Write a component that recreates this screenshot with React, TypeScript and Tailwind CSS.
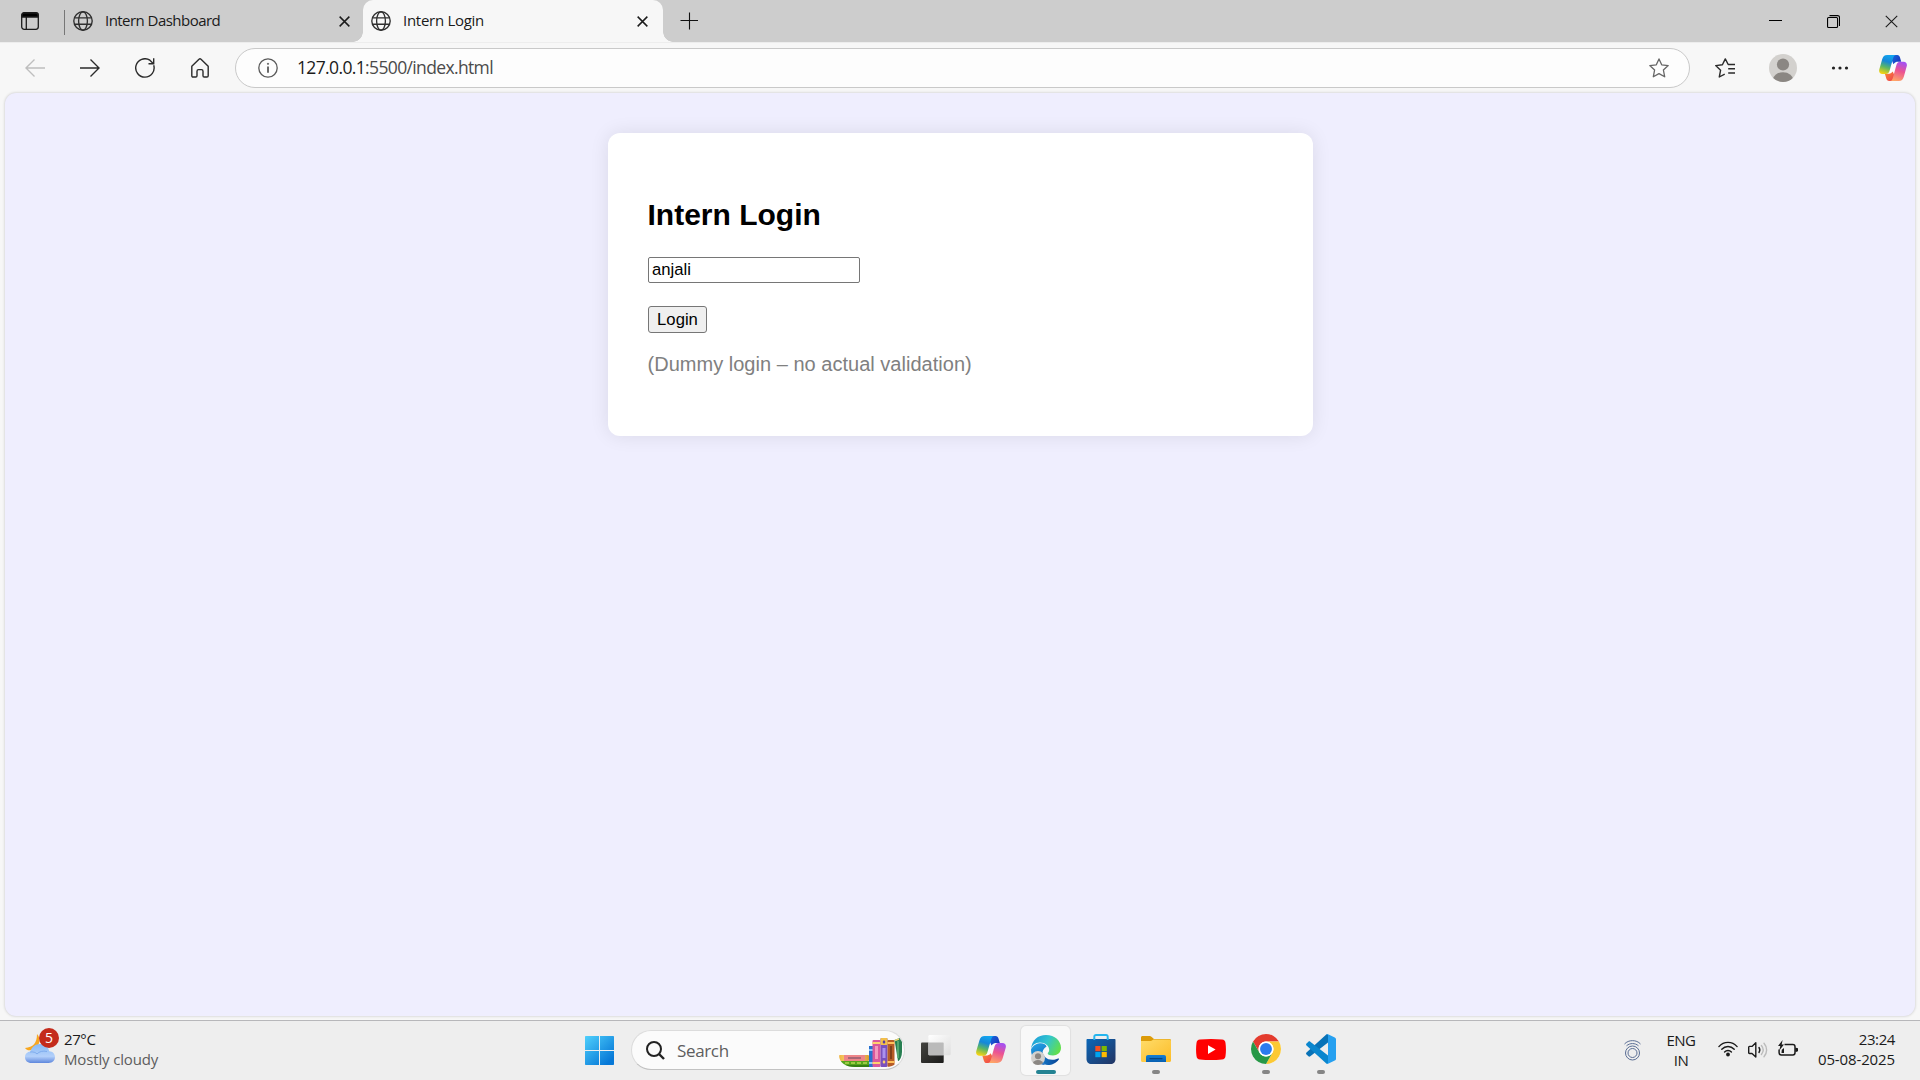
import React from "react";

type P = { className?: string };

const Globe = ({ className = "" }: P) => (
  <svg className={className} width="20" height="20" viewBox="0 0 20 20" fill="none" stroke="#2f2f2f" strokeWidth="1.35">
    <circle cx="10" cy="10" r="9.2" />
    <ellipse cx="10" cy="10" rx="4.4" ry="9.2" />
    <path d="M1.5 6.8h17M1.5 13.2h17" />
  </svg>
);

const Cross = ({ size, w, className = "" }: { size: number; w: number; className?: string }) => (
  <svg className={className} width={size} height={size} viewBox="0 0 12 12" stroke="#1b1b1b" strokeWidth={w} fill="none">
    <path d="M.7.7l10.6 10.6M11.3.7L.7 11.3" />
  </svg>
);

const Copilot = ({ id, w, h }: { id: string; w: number; h: number }) => (
  <svg width={w} height={h} viewBox="0 0 30 27" preserveAspectRatio="none">
    <defs>
      <linearGradient id={id + "a"} x1="0.6" y1="0" x2="0.3" y2="1">
        <stop offset="0" stopColor="#12a5ef" />
        <stop offset=".35" stopColor="#1687d8" />
        <stop offset=".65" stopColor="#5bb765" />
        <stop offset="1" stopColor="#f6d312" />
      </linearGradient>
      <linearGradient id={id + "b"} x1="0.6" y1="0" x2="0.3" y2="1">
        <stop offset="0" stopColor="#a650ef" />
        <stop offset=".45" stopColor="#ec5391" />
        <stop offset="1" stopColor="#ffa766" />
      </linearGradient>
      <linearGradient id={id + "c"} x1="0" y1="0" x2="1" y2=".6">
        <stop offset="0" stopColor="#1670e0" />
        <stop offset="1" stopColor="#1c35bd" />
      </linearGradient>
      <linearGradient id={id + "d"} x1="0" y1="0" x2="1" y2="1">
        <stop offset="0" stopColor="#fb8b33" />
        <stop offset="1" stopColor="#ee3d52" />
      </linearGradient>
    </defs>
    <path d="M13.500 7.500h8L18.500 10l-3.500 11-6.500-1.500z" fill="#fdfdfd" />
    <path d="M14 0h5.600c1.600 0 2.400 1 2.900 2.600L23.800 7.100h-3.300c-2.200 0-3.500.6-5 2.400L13 4z" fill={`url(#${id}c)`} />
    <path d="M16 27h-5.200c-1.700 0-2.500-1-3-2.600L6.300 19.600h3.400c2.300 0 3.700-.6 5-2.400L17 22z" fill={`url(#${id}d)`} />
    <path d="M8.700 0h9.300c-1.700.3-2.300 1.500-2.900 3.500l-3.700 12.700c-.6 2.100-1.800 3.500-4.200 3.500H3.700C.7 19.700-.4 17.600.3 15L3.400 4.400C4.300 1.500 5.800 0 8.700 0z" fill={`url(#${id}a)`} />
    <path d="M21.300 27h-9.300c1.700-.3 2.300-1.500 2.900-3.500l3.700-12.900c.6-2.100 1.800-3.500 4.200-3.500h3.500c3 0 4.100 2.100 3.400 4.700l-3.100 10.800c-.9 2.900-2.400 4.400-5.300 4.400z" fill={`url(#${id}b)`} />
  </svg>
);

const Avatar = ({ size, id }: { size: number; id: string }) => (
  <svg width={size} height={size} viewBox="0 0 28 28">
    <clipPath id={id}><circle cx="14" cy="14" r="14" /></clipPath>
    <circle cx="14" cy="14" r="14" fill="#d3d1ce" />
    <g fill="#8b8783" clipPath={`url(#${id})`}>
      <circle cx="14" cy="10.500" r="6.100" />
      <ellipse cx="14" cy="26.500" rx="10.500" ry="8.300" />
    </g>
  </svg>
);

function TabStrip() {
  return (
    <div className="flex h-[42px] items-stretch bg-[#cdcdcd] text-[15px] text-[#1a1a1a]">
      <div className="flex w-[64px] items-center pl-[21px]">
        <svg width="18" height="18" viewBox="0 0 18 18" fill="none" stroke="#1b1b1b" strokeWidth="1.300">
          <rect x=".7" y=".7" width="16.600" height="16.600" rx="2.500" />
          <path d="M1 3.200C1 1.500 2 1 3.200 1h11.600C16.200 1 17 1.700 17 3.200V5H1z" fill="#000" />
          <path d="M5.300 5v12.500" />
        </svg>
      </div>
      <div className="flex w-[299px] items-center">
        <div className="h-[25px] w-px bg-[#777] mt-[2px]" />
        <Globe className="ml-2" />
        <span className="mb-[2px] ml-3 w-[222px] whitespace-nowrap tracking-[-0.54px]">Intern Dashboard</span>
        <Cross size={11} w={1.6} className="ml-[12px] mt-px" />
      </div>
      <div className="relative flex w-[300px] items-center rounded-t-[10px] bg-[#f7f7f7]">
        <span className="absolute bottom-0 left-[-10px] size-[10px] bg-[radial-gradient(circle_at_0_0,#cdcdcd_9.500px,#f7f7f7_10px)]" />
        <span className="absolute right-[-10px] bottom-0 size-[10px] bg-[radial-gradient(circle_at_100%_0,#cdcdcd_9.500px,#f7f7f7_10px)]" />
        <Globe className="ml-2" />
        <span className="mb-[2px] ml-[12px] w-[222px] whitespace-nowrap tracking-[-0.28px]">Intern Login</span>
        <Cross size={11} w={1.6} className="ml-[12px] mt-px" />
      </div>
      <div className="flex items-center pl-[17px]">
        <svg width="18" height="18" viewBox="0 0 18 18" stroke="#111" strokeWidth="1.100"><path d="M9.500 .5v17M.5 8.500h18" /></svg>
      </div>
      <div className="ml-auto flex items-center pr-[22px]">
        <svg width="13" height="2" viewBox="0 0 13 2"><path d="M0 .5h13" stroke="#000" /></svg>
        <svg className="ml-[45px]" width="13" height="13" viewBox="0 0 13 13" fill="none" stroke="#000" strokeWidth="1.100">
          <rect x=".55" y="2.550" width="10" height="9.900" rx="1" />
          <path d="M2.500.6h8.200c1.200 0 1.800.6 1.800 1.800V11" />
        </svg>
        <Cross size={13} w={1} className="ml-[45px]" />
      </div>
    </div>
  );
}

function Toolbar() {
  return (
    <div className="flex h-[51px] items-center border-t border-[#ededed] bg-[#f7f7f7]">
      <svg className="ml-[25px]" width="20" height="18" viewBox="0 0 20 18" fill="none" stroke="#bebebe" strokeWidth="1.400"><path d="M20 9H1M9.500.6L1 9l8.500 8.400" /></svg>
      <svg className="ml-[35px]" width="20" height="18" viewBox="0 0 20 18" fill="none" stroke="#2b2b2b" strokeWidth="1.400"><path d="M0 9h19M10.500.6L19 9l-8.500 8.400" /></svg>
      <svg className="ml-[35px]" width="20" height="20" viewBox="0 0 20 20" fill="none" stroke="#2b2b2b" strokeWidth="1.400"><path d="M18.700 7.200A9.200 9.200 0 1 1 14.900 2.200l3.300 3.300M18.700.3v5.400h-5.200" /></svg>
      <svg className="ml-[36px]" width="18" height="20" viewBox="0 0 18 20" fill="none" stroke="#2b2b2b" strokeWidth="1.400" strokeLinejoin="round"><path d="M.8 8.300L8 1.200c.6-.5 1.400-.5 2 0l7.200 7.100v9.400c0 .8-.5 1.300-1.300 1.300h-2.700c-.7 0-1.200-.5-1.200-1.200v-4.600c0-1-.6-1.600-1.500-1.600h-3c-.9 0-1.500.6-1.500 1.600v4.600c0 .7-.5 1.200-1.200 1.200H2.100c-.8 0-1.300-.5-1.300-1.300z" /></svg>
      <div className="ml-[26px] flex h-[40px] w-[1455px] items-center rounded-full border border-[#c9c9c9] bg-[#fdfdfd] pr-[20px] pl-[22px]">
        <svg width="20" height="20" viewBox="0 0 20 20" fill="none" stroke="#5a5a5a" strokeWidth="1.300"><circle cx="10" cy="10" r="9.200" /><path d="M10 8.500v6.300" strokeWidth="1.800" /><circle cx="10" cy="5.800" r=".6" fill="#5a5a5a" strokeWidth="1" /></svg>
        <span className="mb-px ml-[19px] text-[17.5px] tracking-[-0.64px] whitespace-nowrap text-[#4b4b4b]"><span className="text-[#1b1b1b]">127.0.0.1</span>:5500/index.html</span>
        <svg className="ml-auto" width="20" height="20" viewBox="0 0 20 20" fill="none" stroke="#666" strokeWidth="1.300" strokeLinejoin="round"><path d="M10 .9l2.700 5.900 6.500.8-4.800 4.400 1.300 6.800L10 15.600l-5.700 3.200L5.600 12 .8 7.600l6.500-.8z" /></svg>
      </div>
      <svg className="ml-[25px]" width="20" height="20" viewBox="0 0 20 20" fill="none" stroke="#2b2b2b" strokeWidth="1.400" strokeLinejoin="round"><path d="M20 6.500h-6.800L10.300.9 7.400 6.700.7 7.600l4.900 4.600-1.300 6.800 5.400-2.900M13.200 10.700H20M13.200 15H20" /></svg>
      <div className="ml-[34px]"><Avatar size={28} id="avatar-bar" /></div>
      <svg className="ml-[34px]" width="18" height="4" viewBox="0 0 18 4" fill="#222"><circle cx="2.500" cy="2" r="1.600" /><circle cx="9" cy="2" r="1.600" /><circle cx="15.500" cy="2" r="1.600" /></svg>
      <div className="ml-[30px]"><Copilot id="cpbar" w={28} h={26} /></div>
    </div>
  );
}

function LoginPage() {
  return (
    <div className="mx-[5px] mb-1 h-[923px] rounded-[11px] bg-[#efeefe] pt-10 font-['Liberation_Sans',Arial,sans-serif] shadow-[0_0_3px_rgba(0,0,0,0.22)]">
      <div className="mx-auto h-[303px] w-[705px] rounded-[12px] bg-white px-10 pt-[65px] shadow-[0_0_19px_rgba(0,0,0,0.09)]">
        <h2 className="h-[34px] text-[30px] leading-[34px] font-bold text-black">Intern Login</h2>
        <input type="text" defaultValue="anjali" className="mt-[25px] block h-[26px] w-[212px] rounded-[2px] border border-[#767676] bg-white pr-[3px] pb-px pl-[3.500px] text-[16.67px] leading-[20px] text-black outline-none" />
        <button className="mt-[23px] block h-[27px] w-[59px] rounded-[3px] border border-[#767676] bg-[#efefef] pl-px text-[16.67px] leading-[24px] text-black">Login</button>
        <p className="mt-5 text-[20px] leading-[23px] tracking-[0.02px] whitespace-nowrap text-[#808080]">(Dummy login – no actual validation)</p>
      </div>
    </div>
  );
}

const Books = () => (
  <svg width="63" height="29" viewBox="0 0 63 29">
    <defs>
      <clipPath id="pill"><path d="M0 0h63v14c0 9-8 15-16 15H16C7 29 0 25 0 17z" /></clipPath>
      <linearGradient id="gold" x1="0" x2="1"><stop offset="0" stopColor="#efb443" /><stop offset=".5" stopColor="#ffe695" /><stop offset="1" stopColor="#d99b31" /></linearGradient>
    </defs>
    <g clipPath="url(#pill)">
      <path d="M2 23h30v6H2z" fill="#56a51c" />
      <path d="M6 25h23" stroke="#b3d84f" strokeWidth="1.500" strokeDasharray="4 2" />
      <path d="M4 28h28" stroke="#2d7212" strokeWidth="1.500" />
      <rect x="0" y="17" width="30" height="6" rx="1" fill="url(#gold)" />
      <rect x="5" y="17" width="21" height="6" fill="#ee8589" />
      <rect x="9" y="19" width="13" height="2" fill="#a86676" />
      <rect x="30" y="8" width="4" height="21" fill="#2870cf" />
      <path d="M30 12h4M30 25h4" stroke="#8ec9fb" strokeWidth="2" />
      <rect x="33.500" y="2" width="8" height="27" rx="1" fill="#d9589b" />
      <path d="M33.500 5h8M33.500 25h8" stroke="#ffd16e" strokeWidth="2" />
      <rect x="36" y="8" width="3" height="13" fill="#f398bd" />
      <rect x="41.500" y="0" width="7" height="29" rx="1" fill="#7951bd" />
      <rect x="41.500" y="0" width="7" height="7" rx="1" fill="#f3c04a" />
      <path d="M45 2l1.500 2L45 6l-1.500-2z" fill="#5537a3" />
      <rect x="43.500" y="10" width="3" height="10" fill="#ab91ed" />
      <path d="M45 22l1.500 2-1.500 2-1.500-2z" fill="#ffd16e" />
      <rect x="48.500" y="2" width="7" height="27" rx="1" fill="#b65c27" />
      <path d="M48.500 5h7M48.500 24h7" stroke="#ffc15a" strokeWidth="2" />
      <rect x="51" y="8" width="2" height="13" fill="#82401b" />
      <path d="M55.500 2l5-2 2.500 4v18l-4 1z" fill="#287f52" />
      <path d="M59 3v17" stroke="#60b57a" strokeWidth="1.500" />
      <path d="M56 2.500l4-1.500" stroke="#e9d572" strokeWidth="1.500" />
    </g>
  </svg>
);

const TaskView = () => (
  <svg width="30" height="28" viewBox="0 0 30 28">
    <defs>
      <linearGradient id="tvd" x1="0" y1="0" x2="1" y2="1"><stop offset="0" stopColor="#444440" /><stop offset="1" stopColor="#1b1b1a" /></linearGradient>
      <linearGradient id="tvl" x1="0" y1="0" x2="1" y2="1"><stop offset="0" stopColor="#fff" /><stop offset="1" stopColor="#dedede" /></linearGradient>
    </defs>
    <rect x="0" y="7.500" width="22.700" height="20.500" rx="1" fill="url(#tvd)" />
    <rect x="7.400" y="0" width="22.300" height="20.200" rx="1.300" fill="url(#tvl)" />
    <path d="M7.400 7.500h14.300c.6 0 1 .4 1 1v11.700H8.400c-.6 0-1-.4-1-1z" fill="#bababa" />
  </svg>
);

const Edge = () => (
  <svg width="30" height="30" viewBox="0 0 30 30">
    <defs>
      <linearGradient id="eg1" x1="0" y1=".2" x2="1" y2=".6"><stop offset="0" stopColor="#1c9bd9" /><stop offset=".5" stopColor="#32c5cf" /><stop offset="1" stopColor="#62df4b" /></linearGradient>
      <linearGradient id="eg2" x1="0" y1="0" x2=".3" y2="1"><stop offset="0" stopColor="#28a7e6" /><stop offset="1" stopColor="#0762bc" /></linearGradient>
      <linearGradient id="eg3" x1="0" y1="0" x2="1" y2="0"><stop offset="0" stopColor="#1377c8" /><stop offset="1" stopColor="#0b4494" /></linearGradient>
    </defs>
    <path d="M0 14.500C0 22.500 5 29.200 14 30c-3.500-4-3.500-9-2.500-13 .6-2.700 2.200-4.600 4-5.300C15 7 3.500 6.500 0 14.500z" fill="url(#eg2)" />
    <path d="M0 14.500C.6 5 7 0 15 0c9 0 15 6 15 12.800 0 5-3.800 7.700-8 7.700-3.500 0-5.300-1-5.300-2 0-.8 1.500-1.300 1.500-3.700C18.200 11 14 7.500 9 7.500c-5 0-8.300 3-9 7z" fill="url(#eg1)" />
    <path d="M11.600 16.500c.1 4.500 4 8.300 9.600 8.300 3 0 5-1 6.100-1.300.7-.2.900.4.500 1C25.500 28 21 30 17 30c-6.300 0-8.400-8-5.400-13.500z" fill="url(#eg3)" />
  </svg>
);

const Store = () => (
  <svg width="30" height="30" viewBox="0 0 30 30">
    <defs><linearGradient id="st" x1="0" y1="0" x2="1" y2="1"><stop offset="0" stopColor="#0b67b8" /><stop offset="1" stopColor="#233462" /></linearGradient></defs>
    <path d="M8.300 6V2.600C8.300 1.600 9 1 10 1h10c1 0 1.700.6 1.700 1.600V6" fill="none" stroke="#24b5ee" strokeWidth="1.900" />
    <path d="M1.500 5h27c.6 0 1 .4 1 1v19c0 3-2 5-5 5h-19c-3 0-5-2-5-5V6c0-.6.400-1 1-1z" fill="url(#st)" />
    <path d="M7.350 4.500h1.900V6h-1.900zM20.750 4.500h1.900V6h-1.900z" fill="#24b5ee" />
    <path d="M9.300 12h5.200v5.200H9.300z" fill="#f25022" /><path d="M15.600 12h5.200v5.200h-5.200z" fill="#7fba00" />
    <path d="M9.300 18h5.200v5.200H9.300z" fill="#00a4ef" /><path d="M15.600 18h5.200v5.200h-5.200z" fill="#ffb900" />
  </svg>
);

const Folder = () => (
  <svg width="30" height="26" viewBox="0 0 30 26">
    <defs>
      <linearGradient id="fo" x1="0" y1="0" x2="1" y2="1"><stop offset="0" stopColor="#ffdc6a" /><stop offset="1" stopColor="#fcbc27" /></linearGradient>
      <linearGradient id="fb" x1="0" y1="0" x2="0" y2="1"><stop offset="0" stopColor="#147fd6" /><stop offset="1" stopColor="#075fb0" /></linearGradient>
    </defs>
    <path d="M0 1.500C0 .6.600 0 1.500 0h7.200c.7 0 1.200.2 1.700.7L13 3h15.500c.9 0 1.500.6 1.500 1.500V9H0z" fill="#dc9b09" />
    <path d="M0 5h10l2.500-1.500h16c.9 0 1.500.6 1.500 1.500v19.500c0 .9-.6 1.500-1.500 1.500h-27C.6 26 0 25.400 0 24.500z" fill="url(#fo)" />
    <path d="M5 26v-5c0-1.300.8-2 2-2h16c1.200 0 2 .7 2 2v5z" fill="url(#fb)" />
    <path d="M9 22.600h12" stroke="#064683" strokeWidth="1.200" strokeLinecap="round" />
  </svg>
);

const Youtube = () => (
  <svg width="30" height="21" viewBox="0 0 30 21"><path d="M4 .5Q15-.5 26 .5Q29.200.8 29.500 4Q30.400 10.500 29.500 17Q29.200 20.200 26 20.500Q15 21.500 4 20.500Q.8 20.200.5 17Q-.4 10.500.5 4Q.8.8 4 .5z" fill="#f00" /><path d="M12 6.200v8.800l7.600-4.400z" fill="#fff" /></svg>
);

const Chrome = () => (
  <svg width="30" height="30" viewBox="0 0 48 48">
    <circle cx="24" cy="24" r="24" fill="#fff" />
    <path d="M3.220 12A24 24 0 0 1 44.780 12H24A12 12 0 0 0 13.610 30z" fill="#e33b2e" />
    <path d="M44.780 12A24 24 0 0 1 24 48L34.390 30A12 12 0 0 0 24 12z" fill="#fcc934" />
    <path d="M24 48A24 24 0 0 1 3.220 12L13.610 30A12 12 0 0 0 34.390 30z" fill="#279847" />
    <circle cx="24" cy="24" r="12" fill="#fff" /><circle cx="24" cy="24" r="9.500" fill="#2b7bee" />
  </svg>
);

const VSCode = () => (
  <svg width="30" height="30" viewBox="0 0 30 30">
    <path d="M22 .3v8.200L4.300 22.300c-.6.5-1.300.5-1.900 0L.5 20.500c-.6-.6-.6-1.400 0-2L20 .7c.6-.5 1.300-.6 2-.4z" fill="#0872b7" />
    <path d="M22 29.700v-8.200L4.300 7.700c-.6-.5-1.300-.5-1.900 0L.5 9.500c-.6.6-.6 1.400 0 2L20 29.300c.6.500 1.300.6 2 .4z" fill="#0a86ce" />
    <path d="M22 .2l6.800 3.200c.8.4 1.200 1 1.200 1.900v19.400c0 .9-.4 1.500-1.200 1.900L22 29.800c-.8.300-1.500.1-2-.5 1 .7 2 .2 2-.9V1.600c0-1.100-1-1.600-2-.9.500-.6 1.200-.8 2-.5z" fill="#26a0f0" />
    <path d="M22 1v28l7-3.500V4.500z" fill="#26a0f0" />
  </svg>
);

function TaskIcon({ children, mark }: { children: React.ReactNode; mark?: boolean }) {
  return (
    <div className="flex h-[48px] w-[55px] flex-col items-center">
      <div className="flex h-[44px] items-center justify-center pb-[6px] pt-[8px]">{children}</div>
      {mark && <div className="h-1 w-2 rounded-full bg-[#858585]" />}
    </div>
  );
}

function Taskbar() {
  return (
    <div className="flex h-[60px] items-start border-t border-[#b7b7ba] bg-[#eeeeee] text-[#1b1b1b]">
      <div className="flex w-[585px] pt-[6px] pl-[25px]">
        <div className="relative h-[40px] w-[34px]">
          <svg className="mt-[7px]" width="30" height="30" viewBox="0 0 30 30">
            <defs><linearGradient id="cl" x1="0" y1="0" x2="0" y2="1"><stop offset="0" stopColor="#88baf5" /><stop offset=".65" stopColor="#b3d0fa" /><stop offset="1" stopColor="#5e87dc" /></linearGradient></defs>
            <path d="M12 0c5 5 2 14-5 16-3 .8-5.500.3-7-2C8 13.500 12 9 12 0z" fill="#f7a61f" />
            <path d="M6.500 29C2.500 29 0 26.500 0 23.200c0-3 2.200-5.200 5.400-5.600C6.800 12.700 10.500 10 15 10c5 0 8.500 3 9.200 7.200 3.500.2 5.800 2.700 5.800 5.900 0 3.500-2.600 5.900-6.300 5.900z" fill="url(#cl)" />
            <path d="M5 18c3-.5 6 .5 7 2 2-2.500 6-3.500 10-2.500" fill="none" stroke="#75a4ea" strokeWidth=".8" />
          </svg>
          <span className="absolute top-[1px] left-[14px] flex size-[20px] items-center justify-center rounded-full bg-[#c42b1c] text-[14px] leading-[20px] text-white">5</span>
        </div>
        <div className="ml-[5px] pt-[2px] text-[15px] leading-[20px]">
          <div className="tracking-[-0.4px]">27°C</div>
          <div className="tracking-[-0.15px] text-[#5d5d5d]">Mostly cloudy</div>
        </div>
      </div>
      <svg className="mt-[15px]" width="29" height="29" viewBox="0 0 29 29">
        <defs><linearGradient id="win" gradientUnits="userSpaceOnUse" x1="0" y1="0" x2="24" y2="26"><stop offset="0" stopColor="#4fd0fc" /><stop offset="1" stopColor="#0678d7" /></linearGradient></defs>
        <path d="M1 0h13v14H0V1c0-.6.400-1 1-1zM15 0h13c.6 0 1 .4 1 1v13H15zM0 15h14v14H1c-.6 0-1-.4-1-1zM15 15h14v13c0 .6-.4 1-1 1H15z" fill="url(#win)" />
      </svg>
      <div className="mt-[9px] ml-[17px] flex h-[40px] w-[274px] items-center rounded-full border border-[#dcdcdc] border-b-[#c2c2c2] bg-[#fbfbfb] pr-[2px] pl-[14px]">
        <svg width="19" height="19" viewBox="0 0 19 19" fill="none" stroke="#222" strokeWidth="2"><circle cx="8" cy="8" r="7" /><path d="M13 13l5 5" strokeWidth="2.400" /></svg>
        <span className="mt-px ml-[12px] text-[17px] tracking-[-0.35px] text-[#5e5e5e]">Search</span>
        <div className="mt-[5px] ml-auto"><Books /></div>
      </div>
      <div className="mt-[5px] ml-[3px] flex">
        <TaskIcon><TaskView /></TaskIcon>
        <TaskIcon><Copilot id="cptask" w={30} h={27} /></TaskIcon>
        <div className="flex w-[55px] justify-center">
          <div className="relative flex h-[49px] w-[49px] flex-col items-center rounded-[5px] bg-[#f8f8f8] pt-[9px] shadow-[0_0_1px_1px_rgba(0,0,0,0.06)]">
            <Edge />
            <span className="absolute top-[25px] left-[10px]"><Avatar size={14} id="avatar-edge" /></span>
            <div className="mt-[5px] h-[4px] w-[20px] rounded-full bg-[#248393]" />
          </div>
        </div>
        <TaskIcon><Store /></TaskIcon>
        <TaskIcon mark><Folder /></TaskIcon>
        <TaskIcon><Youtube /></TaskIcon>
        <TaskIcon mark><Chrome /></TaskIcon>
        <TaskIcon mark><VSCode /></TaskIcon>
      </div>
      <div className="ml-auto flex h-full items-start pr-[25px] text-[15px] leading-[20px]">
        <svg className="mt-[19px]" width="17" height="21" viewBox="0 0 17 21" fill="none" stroke="#5b6e95" strokeWidth="1">
          <circle cx="8.500" cy="13" r="7" /><circle cx="8.500" cy="13" r="4.500" />
          <path d="M.5 4C4.500-.5 12.500-.5 16.500 4M2.500 5.800c3.500-3 8.500-3 12 0" />
        </svg>
        <div className="ml-[22px] w-[36px] pt-[9px] text-center tracking-[-0.5px]"><div>ENG</div><div>IN</div></div>
        <svg className="mt-[20px] ml-[19px]" width="20" height="16" viewBox="0 0 20 16" fill="none" stroke="#1b1b1b" strokeWidth="1.400" strokeLinecap="round">
          <path d="M.9 5.600c5-5.600 13.200-5.600 18.200 0M3.800 8.300c3.400-3.800 9-3.800 12.400 0M6.600 11c1.900-2.100 4.900-2.100 6.800 0" /><circle cx="10" cy="13.500" r="1.200" fill="#1b1b1b" />
        </svg>
        <svg className="mt-[20px] ml-[10px]" width="20" height="18" viewBox="0 0 20 18" fill="none" stroke="#1b1b1b" strokeWidth="1.400" strokeLinejoin="round" strokeLinecap="round">
          <path d="M.7 6.200c0-.5.300-.8.800-.8H4L7.800 1.800V16L4 12.500H1.500c-.5 0-.8-.3-.8-.8z" /><path d="M11 6.500c1 1.500 1 3.500 0 5" /><path d="M13.400 4.500c2.200 2.700 2.200 6.300 0 9M16 2.300c3.500 4 3.500 9.400 0 13.400" stroke="#bbb" />
        </svg>
        <svg className="mt-[19px] ml-[10px]" width="21" height="17" viewBox="0 0 21 17" fill="none" stroke="#1b1b1b" strokeWidth="1.500">
          <path d="M6.500 4.500h8.300c1.400 0 2.200.8 2.200 2.200v6.100c0 1.400-.8 2.200-2.200 2.200H3.300c-1.400 0-2.200-.8-2.200-2.200V9.500" />
          <path d="M17.500 7.500l2.500 1v2.500l-2.500 1z" fill="#1b1b1b" stroke="none" /><path d="M18.500 8v3.500" strokeWidth="2" />
          <path d="M4.600 0L0 6h2.300L1.300 10.500 6 4.500H3.700z" fill="#1b1b1b" stroke="none" /><path d="M3.500 13l.3-3.300L6 8v5z" fill="#1b1b1b" stroke="none" />
        </svg>
        <div className="w-[96px] pt-[8px] text-right whitespace-nowrap"><div className="tracking-[-0.4px]">23:24</div><div className="tracking-[-0.12px]">05-08-2025</div></div>
      </div>
    </div>
  );
}

export default function App() {
  return (
    <div className="h-[1080px] w-[1920px] overflow-hidden bg-[#f7f7f7] font-['Open_Sans','Noto_Sans',sans-serif]">
      <TabStrip />
      <Toolbar />
      <LoginPage />
      <Taskbar />
    </div>
  );
}
